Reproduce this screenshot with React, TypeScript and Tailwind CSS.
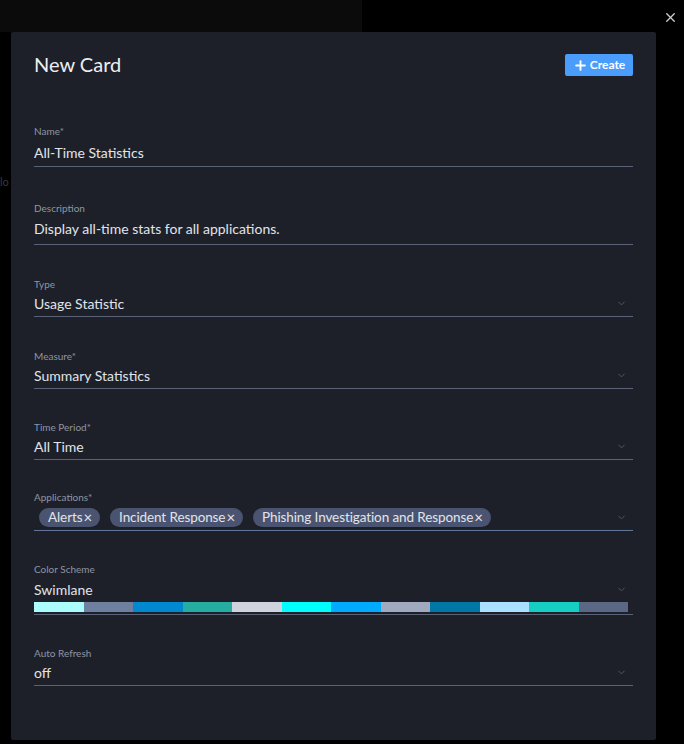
import { X, Plus, ChevronDown } from "lucide-react";

const font = { fontFamily: "Lato, 'Noto Sans', sans-serif" };

const swimlane = [
  "#aafcfd",
  "#6f7fa0",
  "#0089cf",
  "#26ada1",
  "#cfd3de",
  "#00fefe",
  "#00aaff",
  "#a0aabf",
  "#0077a7",
  "#aae1ff",
  "#17cec3",
  "#5b6885",
];

function Label({ children }: { children: React.ReactNode }) {
  return <div className="h-[14px] text-[10px] leading-[14px] text-[#8e95a3]">{children}</div>;
}

function SelectField({ label, value, className = "" }: { label: string; value: string; className?: string }) {
  return (
    <div className={className}>
      <Label>{label}</Label>
      <div className="mt-px flex h-[25px] items-center justify-between border-b border-[#596276] pb-px">
        <span className="text-[14px] text-[#e1e4ea]">{value}</span>
        <ChevronDown className="mr-[6px] h-[11px] w-[11px] text-[#555b6a]" strokeWidth={2} />
      </div>
    </div>
  );
}

function Chip({ text }: { text: string }) {
  return (
    <span className="inline-flex h-[19px] items-center rounded-full bg-[#4a5470] pl-[9px] pr-[8px] text-[13.5px] tracking-[-0.1px] text-[#e1e4ea]">
      {text}
      <span className="ml-px text-[15px] leading-none">×</span>
    </span>
  );
}

export default function App() {
  return (
    <div className="relative h-[744px] w-[684px] overflow-hidden bg-black" style={font}>
      {/* page behind the overlay */}
      <div className="absolute left-0 top-0 h-[32px] w-[362px] bg-[#0b0b0c]" />
      <div className="absolute left-0 top-[174px] text-[11px] text-[#35383f]">lo</div>

      <button className="absolute right-[6px] top-[10px] text-[#c9ccd2]">
        <X className="h-[15px] w-[15px]" strokeWidth={2.2} />
      </button>

      <div className="absolute left-[11px] top-[32px] h-[708px] w-[645px] rounded-[2px] bg-[#1d2029] px-[23px] pt-[22px]">
        <div className="flex h-[22px] items-center justify-between">
          <h1 className="pb-[3px] text-[20px] leading-[22px] text-[#eceef2]">New Card</h1>
          <button className="flex h-[22px] w-[68px] items-center justify-center gap-[2px] rounded-[2px] bg-[#4a9dfb] text-[12px] font-bold text-white">
            <Plus className="h-[15px] w-[15px]" strokeWidth={3} />
            Create
          </button>
        </div>

        <div className="mt-[48px]">
          <Label>Name*</Label>
          <div className="mt-px flex h-[28px] items-center border-b border-[#596276] pb-px">
            <span className="text-[14px] text-[#e1e4ea]">All-Time Statistics</span>
          </div>
        </div>

        <div className="mt-[34px]">
          <Label>Description</Label>
          <div className="mt-px h-[29px] border-b border-[#596276]">
            <div className="flex h-[24px] items-center text-[14px] text-[#e1e4ea]">
              Display all-time stats for all applications.
            </div>
          </div>
        </div>

        <SelectField className="mt-[32px]" label="Type" value="Usage Statistic" />
        <SelectField className="mt-[32px]" label="Measure*" value="Summary Statistics" />
        <SelectField className="mt-[31px]" label="Time Period*" value="All Time" />

        <div className="mt-[30px]">
          <Label>Applications*</Label>
          <div className="mt-px flex h-[26px] items-center justify-between border-b border-[#62769a]">
            <div className="flex items-center gap-[10px] pl-[5px]">
              <Chip text="Alerts" />
              <Chip text="Incident Response" />
              <Chip text="Phishing Investigation and Response" />
            </div>
            <ChevronDown className="mr-[6px] h-[11px] w-[11px] text-[#555b6a]" strokeWidth={2} />
          </div>
        </div>

        <div className="mt-[31px]">
          <Label>Color Scheme</Label>
          <div className="mt-px border-b border-[#596276] pb-[2px]">
            <div className="flex h-[24px] items-center justify-between">
              <span className="text-[14px] text-[#e1e4ea]">Swimlane</span>
              <ChevronDown className="mr-[6px] h-[11px] w-[11px] text-[#555b6a]" strokeWidth={2} />
            </div>
            <div className="mt-px flex h-[10px] w-[594px]">
              {swimlane.map((c) => (
                <div key={c} className="h-full flex-1" style={{ backgroundColor: c }} />
              ))}
            </div>
          </div>
        </div>

        <SelectField className="mt-[31px]" label="Auto Refresh" value="off" />
      </div>
    </div>
  );
}
